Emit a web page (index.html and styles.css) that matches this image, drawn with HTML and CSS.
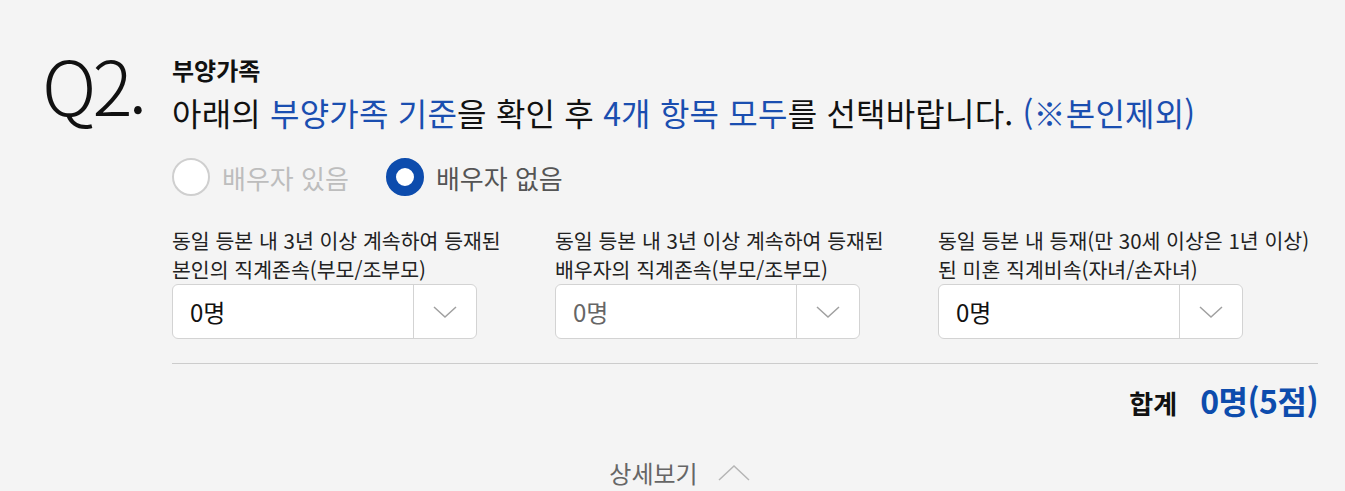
FILE: index.html
```html
<!DOCTYPE html>
<html lang="ko">
<head>
    <meta charset="UTF-8">
    <meta name="viewport" content="width=device-width, initial-scale=1.0">
    <title>부양가족</title>
    <link rel="stylesheet" href="styles.css">
</head>
<body>
    <div class="question">
        <div class="q-num">Q2.</div>
        <div class="q-body">
            <h3 class="q-title">부양가족</h3>
            <p class="q-desc">아래의 <em>부양가족 기준</em>을 확인 후 <em>4개 항목 모두</em>를 선택바랍니다. <em>(※본인제외)</em></p>

            <div class="radios">
                <label class="radio disabled"><span class="dot"></span>배우자 있음</label>
                <label class="radio checked"><span class="dot"></span>배우자 없음</label>
            </div>

            <div class="fields">
                <div class="field">
                    <p class="field-label">동일 등본 내 3년 이상 계속하여 등재된<br>본인의 직계존속(부모/조부모)</p>
                    <div class="select">
                        <span class="select-value">0명</span>
                        <span class="select-arrow">
                            <svg width="26" height="14" viewBox="0 0 26 14"><path d="M2 2 L13 12 L24 2" fill="none" stroke="#a0a0a0" stroke-width="1.5"/></svg>
                        </span>
                    </div>
                </div>
                <div class="field">
                    <p class="field-label">동일 등본 내 3년 이상 계속하여 등재된<br>배우자의 직계존속(부모/조부모)</p>
                    <div class="select">
                        <span class="select-value muted">0명</span>
                        <span class="select-arrow">
                            <svg width="26" height="14" viewBox="0 0 26 14"><path d="M2 2 L13 12 L24 2" fill="none" stroke="#a0a0a0" stroke-width="1.5"/></svg>
                        </span>
                    </div>
                </div>
                <div class="field">
                    <p class="field-label">동일 등본 내 등재(만 30세 이상은 1년 이상)<br>된 미혼 직계비속(자녀/손자녀)</p>
                    <div class="select">
                        <span class="select-value">0명</span>
                        <span class="select-arrow">
                            <svg width="26" height="14" viewBox="0 0 26 14"><path d="M2 2 L13 12 L24 2" fill="none" stroke="#a0a0a0" stroke-width="1.5"/></svg>
                        </span>
                    </div>
                </div>
            </div>

            <div class="total">
                <span class="total-label">합계</span>
                <span class="total-value">0명(5점)</span>
            </div>
        </div>
    </div>

    <div class="more">
        <span>상세보기</span>
        <svg width="32" height="17" viewBox="0 0 32 17"><path d="M1 16 L16 2 L31 16" fill="none" stroke="#b5b5b5" stroke-width="1.5"/></svg>
    </div>
</body>
</html>
```

FILE: styles.css
```css
body {
    margin: 0;
    background: #f4f4f4;
    font-family: "Noto Sans CJK KR", "Noto Sans", sans-serif;
    color: #111;
}
.question {
    display: flex;
    padding: 54px 27px 0 42px;
}
.q-num {
    width: 130px;
    flex-shrink: 0;
    font-size: 75px;
    font-weight: 300;
    line-height: 1;
    letter-spacing: -4px;
    margin-top: -8px;
}
.q-body {
    flex: 1;
}
.q-title {
    margin: 0;
    font-size: 24px;
    font-weight: bold;
    line-height: 32px;
}
.q-desc {
    margin: 5px 0 0;
    font-size: 32px;
    line-height: 42px;
    letter-spacing: 0.2px;
}
.q-desc em {
    font-style: normal;
    color: #1a4eb0;
}
.radios {
    display: flex;
    gap: 37px;
    margin-top: 25px;
}
.radio {
    display: flex;
    align-items: center;
    gap: 12px;
    font-size: 26px;
    color: #555;
}
.radio .dot {
    box-sizing: border-box;
    width: 38px;
    height: 38px;
    border-radius: 50%;
    background: #fff;
    border: 2px solid #cfcfcf;
}
.radio.disabled {
    color: #bdbdbd;
}
.radio.checked .dot {
    border: 10px solid #0d4cad;
}
.fields {
    display: grid;
    grid-template-columns: repeat(3, 305px);
    column-gap: 78px;
    margin-top: 30px;
    padding-bottom: 24px;
    border-bottom: 1px solid #cccccc;
}
.field-label {
    margin: 0;
    font-size: 20.5px;
    line-height: 29px;
    color: #222;
    white-space: nowrap;
}
.select {
    display: flex;
    height: 55px;
    box-sizing: border-box;
    background: #fff;
    border: 1px solid #d3d3d3;
    border-radius: 6px;
}
.select-value {
    flex: 1;
    display: flex;
    align-items: center;
    padding-left: 17px;
    font-size: 24px;
    color: #111;
}
.select-value.muted {
    color: #666;
}
.select-arrow {
    width: 62px;
    display: flex;
    align-items: center;
    justify-content: center;
    border-left: 1px solid #d3d3d3;
}
.total {
    display: flex;
    justify-content: flex-end;
    align-items: baseline;
    gap: 23px;
    margin-top: 13px;
}
.total-label {
    font-size: 26px;
    font-weight: bold;
}
.total-value {
    font-size: 32px;
    font-weight: bold;
    color: #0d4cad;
    letter-spacing: -0.5px;
}
.more {
    display: flex;
    justify-content: center;
    align-items: center;
    gap: 20px;
    margin-top: 32px;
    padding-left: 14px;
    font-size: 24px;
    color: #666;
}
```
